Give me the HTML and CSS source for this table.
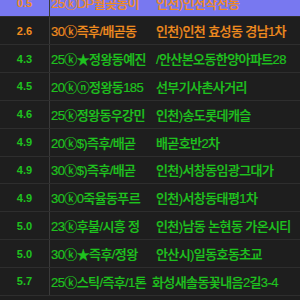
FILE: index.html
```
<!DOCTYPE html>
<html lang="ko">
<head>
<meta charset="utf-8">
<link rel="stylesheet" href="styles.css">
</head>
<body>
<div class="list">
  <div class="row sel orange"><div class="dist">0.5</div><div class="name">25ⓚDP월곶동이</div><div class="addr">인천)인천작전동</div></div>
  <div class="row orange"><div class="dist">2.6</div><div class="name">30ⓚ즉후/배곧동</div><div class="addr">인천)인천 효성동 경남1차</div></div>
  <div class="row green"><div class="dist">4.3</div><div class="name">25ⓚ★정왕동예진</div><div class="addr">/안산본오동한양아파트28</div></div>
  <div class="row green"><div class="dist">4.5</div><div class="name">20ⓚⓝ정왕동185</div><div class="addr">선부기사촌사거리</div></div>
  <div class="row green"><div class="dist">4.6</div><div class="name">25ⓚ정왕동우강민</div><div class="addr">인천)송도롯데캐슬</div></div>
  <div class="row green"><div class="dist">4.9</div><div class="name">20ⓚ$)즉후/배곧</div><div class="addr">배곧호반2차</div></div>
  <div class="row green"><div class="dist">4.9</div><div class="name">30ⓚ$)즉후/배곧</div><div class="addr">인천)서창동임광그대가</div></div>
  <div class="row green"><div class="dist">4.9</div><div class="name">30ⓚ0죽율동푸르</div><div class="addr">인천)서창동태평1차</div></div>
  <div class="row green"><div class="dist">5.0</div><div class="name">23ⓚ후불/시흥 정</div><div class="addr">인천)남동 논현동 가온시티</div></div>
  <div class="row green"><div class="dist">5.0</div><div class="name">30ⓚ★즉후/정왕</div><div class="addr">안산시)일동호동초교</div></div>
  <div class="row green"><div class="dist">5.7</div><div class="name">25ⓚ스틱/즉후/1톤</div><div class="addr long">화성새솔동꽃내음2길3-4</div></div>
</div>
</body>
</html>
```
FILE: styles.css
```
html, body {
  margin: 0;
  padding: 0;
  background: #1e1e1e;
  overflow: hidden;
}
body {
  width: 300px;
  height: 300px;
  font-family: "Liberation Sans", "Noto Sans CJK KR", sans-serif;
}
.list {
  margin-top: -10.5px;
}
.row {
  display: grid;
  grid-template-columns: 50px 103px 147px;
  height: 27.85px;
  box-sizing: border-box;
  border-bottom: 1px solid #2e2e2e;
  align-items: center;
}
.row.sel {
  background: #7878f0;
}
.orange { color: #f08c1e; }
.green { color: #1ec31e; }
.dist {
  height: 100%;
  display: flex;
  align-items: center;
  justify-content: center;
  border-right: 1px solid #3a3a3a;
  box-sizing: border-box;
  font-size: 11px;
  font-weight: 700;
}
.name, .addr {
  white-space: nowrap;
  overflow: hidden;
  font-size: 13px;
  font-weight: 500;
  letter-spacing: -0.6px;
  -webkit-text-stroke: 0.2px currentColor;
}
.name {
  padding-left: 1px;
}
.addr {
  padding-left: 3px;
}
.addr.long {
  margin-left: -4px;
  position: relative;
}
```
